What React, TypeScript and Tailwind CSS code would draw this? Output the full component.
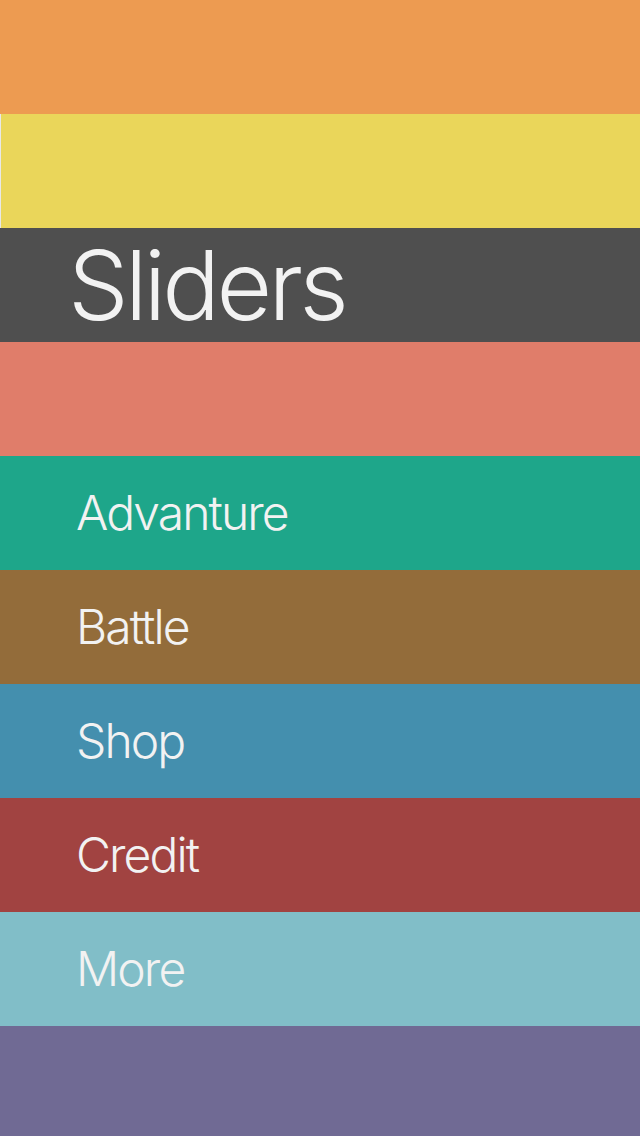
export default function App() {
  const font = { fontFamily: "Inter, 'Noto Sans', sans-serif" };
  const item = "h-[114px] flex items-center pl-[76px] text-[48px] font-light text-[#f2f2f2] tracking-[-1.9px]";
  return (
    <div className="flex flex-col w-[640px] h-[1136px] overflow-hidden" style={font}>
      <div className="h-[114px] bg-[#ed9b51]" />
      <div className="h-[114px] bg-[#ead65a] border-l border-[#e8e8e8]" />
      <div className="h-[114px] bg-[#4f4f4f] flex items-center pl-[68px] text-[96px] font-light text-[#f2f2f2] tracking-[-3.7px]">
        Sliders
      </div>
      <div className="h-[114px] bg-[#e07d6a]" />
      <div className={`${item} bg-[#1ea68a]`}>Advanture</div>
      <div className={`${item} bg-[#936c3a]`}>Battle</div>
      <div className={`${item} bg-[#448fae]`}>Shop</div>
      <div className={`${item} bg-[#a14341]`}>Credit</div>
      <div className={`${item} bg-[#81bec8]`}>More</div>
      <div className="h-[110px] bg-[#706a94]" />
    </div>
  );
}
